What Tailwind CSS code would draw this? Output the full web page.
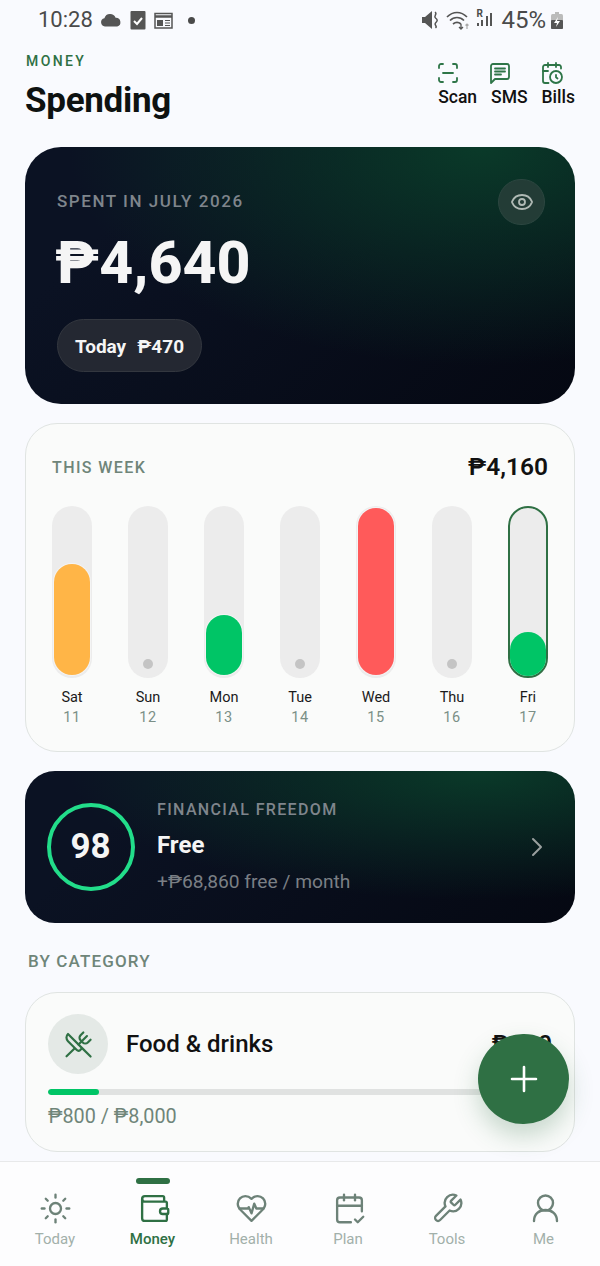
<!DOCTYPE html>
<html lang="en">
<head>
  <meta charset="UTF-8" />
  <meta name="viewport" content="width=device-width, initial-scale=1.0" />
  <title>Spending</title>
  <script src="https://cdn.jsdelivr.net/npm/@tailwindcss/browser@4"></script>
</head>
<body class="bg-[#f9fafe] font-['Roboto',sans-serif]">
<div class="relative w-[600px] h-[1266px] overflow-hidden">

  <!-- status bar -->
  <div class="h-[40px] flex items-center pl-[38px] pr-[37px] text-[#4a4a4a]">
    <span class="text-[22px] leading-none">10:28</span>
    <svg class="ml-[7px]" width="22" height="14" viewBox="0 0 22 14" fill="#555"><path d="M5 13.5a4.2 4.2 0 0 1-.6-8.3A6 6 0 0 1 15.6 4.7a4.5 4.5 0 0 1 1.6 8.8z"/></svg>
    <svg class="ml-[8px]" width="16" height="19" viewBox="0 0 16 19"><rect x="0.5" width="15" height="18.5" rx="1" fill="#555"/><path d="M4 10l3 3 5-6" stroke="#fff" stroke-width="2" fill="none"/></svg>
    <svg class="ml-[8px]" width="19" height="17" viewBox="0 0 19 17" fill="none" stroke="#555"><rect x="1" y="1.5" width="17" height="14.5" stroke-width="1.5"/><path d="M1 4.5h17" stroke-width="2.5"/><rect x="3" y="8" width="6" height="6" fill="#555" stroke="none"/><path d="M11 8.5h5M11 11h5M11 13.5h5" stroke-width="1"/></svg>
    <span class="ml-[15px] w-[7px] h-[7px] rounded-full bg-[#4a4a4a]"></span>
    <div class="ml-auto flex items-center">
      <svg width="17" height="20" viewBox="0 0 17 20" fill="#555"><path d="M0 7h3l7-6v18l-7-6H0z"/><path d="M13 2c3 2-2 4 .5 6s2 3 0 5 2.500 3 0 5" stroke="#555" stroke-width="1.5" fill="none"/></svg>
      <svg class="ml-[7px]" width="24" height="20" viewBox="0 0 24 20" fill="none" stroke="#555" stroke-width="1.7"><path d="M1 7c6-6 14-6 20 0M4 10.500c4-4 10-4 14 0M7 14c2.500-2 5.500-2 8 0"/><path d="M15 14v5M13 17l2 2 2-2" stroke-width="1.3"/><path d="M21 19v-5M19.500 15.500l1.500-1.500 1.500 1.500" stroke="#aaa" stroke-width="1.2"/></svg>
      <div class="relative ml-[6px] w-[17px] h-[22px]">
        <span class="absolute left-0 top-0 text-[10px] font-bold leading-none">R</span>
        <span class="absolute left-[1px] bottom-[5px] w-[2px] h-[3px] bg-[#555]"></span>
        <span class="absolute left-[5px] bottom-[5px] w-[2px] h-[6px] bg-[#555]"></span>
        <span class="absolute left-[10px] bottom-[5px] w-[2px] h-[10px] bg-[#555]"></span>
        <span class="absolute left-[14px] bottom-[5px] w-[2px] h-[13px] bg-[#555]"></span>
      </div>
      <span class="ml-[8px] text-[24px] leading-none">45%</span>
      <svg class="ml-[5px]" width="12" height="17" viewBox="0 0 12 17"><rect x="4" width="4" height="2" fill="#bbb"/><rect y="2" width="12" height="15" rx="1.5" fill="#bbb"/><rect y="8" width="12" height="9" rx="1" fill="#555"/><path d="M7 5L3 11h3l-1 4 4-6H6z" fill="#fff"/></svg>
    </div>
  </div>

  <!-- header -->
  <div class="flex justify-between pl-[25px] pr-[25px] h-[107px]">
    <div>
      <div class="mt-[13px] ml-[1px] text-[14px] leading-[16px] font-medium tracking-[2.4px] text-[#2f7044]">MONEY</div>
      <div class="mt-[12px] text-[35px] leading-[40px] font-bold text-[#0e1211] tracking-[-0.3px]">Spending</div>
    </div>
    <div class="flex gap-[14px] mt-[21px] h-fit">
      <div class="flex flex-col items-start">
        <svg class="-ml-[2px]" width="24" height="24" viewBox="0 0 24 24" fill="none" stroke="#2e7548" stroke-width="1.8" stroke-linecap="round" stroke-linejoin="round"><path d="M3 7V5a2 2 0 0 1 2-2h2"/><path d="M17 3h2a2 2 0 0 1 2 2v2"/><path d="M21 17v2a2 2 0 0 1-2 2h-2"/><path d="M7 21H5a2 2 0 0 1-2-2v-2"/><path d="M7 12h10"/></svg>
        <span class="mt-[2px] text-[17.5px] leading-[20px] font-medium text-[#111]">Scan</span>
      </div>
      <div class="flex flex-col items-start">
        <svg class="-ml-[3px]" width="24" height="24" viewBox="0 0 24 24" fill="none" stroke="#2e7548" stroke-width="1.8" stroke-linecap="round" stroke-linejoin="round"><path d="M21 16a2 2 0 0 1-2 2H7l-4 4V5a2 2 0 0 1 2-2h14a2 2 0 0 1 2 2z"/><path d="M7 7.500h10"/><path d="M7 10.500h10"/><path d="M7 13.500h6"/></svg>
        <span class="mt-[2px] text-[17.5px] leading-[20px] font-medium text-[#111]">SMS</span>
      </div>
      <div class="flex flex-col items-start">
        <svg class="-ml-[2px]" width="24" height="24" viewBox="0 0 24 24" fill="none" stroke="#2e7548" stroke-width="1.8" stroke-linecap="round" stroke-linejoin="round"><path d="M21 7.500V6a2 2 0 0 0-2-2H5a2 2 0 0 0-2 2v14a2 2 0 0 0 2 2h3.500"/><path d="M16 2v4"/><path d="M8 2v4"/><path d="M3 10h5"/><path d="M17.500 17.500 16 16.300V14"/><circle cx="16" cy="16" r="6"/></svg>
        <span class="mt-[2px] text-[17.5px] leading-[20px] font-medium text-[#111]">Bills</span>
      </div>
    </div>
  </div>

  <div class="px-[25px]">
    <!-- hero card -->
    <div class="relative h-[257px] rounded-[36px] bg-[radial-gradient(ellipse_75%_85%_at_83%_0%,#0a3a29_0%,transparent_100%),linear-gradient(135deg,#0b1223_20%,#050812_100%)] pt-[45px] pl-[32px]">
      <div class="text-[17px] leading-[19px] font-medium tracking-[1.55px] text-[#7f858c]">SPENT IN JULY 2026</div>
      <div class="mt-[18px] -ml-[2px] text-[59px] leading-[68px] font-extrabold text-[#f5f5f5]">₱4,640</div>
      <div class="mt-[22px] w-fit h-[53px] pl-[17px] pr-[17px] pt-[3px] flex items-center gap-[11px] rounded-full bg-[#242832] border border-[#33373f] text-[19px] font-bold text-[#f5f5f5]">
        <span>Today</span><span>₱470</span>
      </div>
      <div class="absolute top-[32px] right-[30px] w-[47px] h-[46px] rounded-full bg-[#233c36] border border-[#2c4640] flex items-center justify-center">
        <svg width="24" height="24" viewBox="0 0 24 24" fill="none" stroke="#b0bab5" stroke-width="1.8" stroke-linecap="round" stroke-linejoin="round"><path d="M2.062 12.348a1 1 0 0 1 0-.696 10.750 10.750 0 0 1 19.876 0 1 1 0 0 1 0 .696 10.750 10.750 0 0 1-19.876 0"/><circle cx="12" cy="12" r="3"/></svg>
      </div>
    </div>

    <!-- this week -->
    <div class="mt-[19px] h-[329px] rounded-[32px] bg-[#fafbfa] border-[1.5px] border-[#e0e4e2] px-[26px] pt-[30px]">
      <div class="flex items-center justify-between h-[27px]">
        <span class="text-[16px] font-medium tracking-[1.4px] text-[#6f8579]">THIS WEEK</span>
        <span class="text-[24.5px] font-semibold text-[#111]">₱4,160</span>
      </div>
      <div class="mt-[25px] flex justify-between">
        <!-- Sat -->
        <div class="w-[40px] flex flex-col items-center">
          <div class="relative w-[40px] h-[172px] rounded-full bg-[#ececec]">
            <div class="absolute left-[2px] right-[2px] bottom-[3px] h-[111px] rounded-[18px] bg-[#ffb547] shadow-[0_0_0_1px_#f4f4f4]"></div>
          </div>
          <div class="mt-[11px] text-[14.5px] leading-[18px] text-[#1a1a1a]">Sat</div>
          <div class="mt-[2px] text-[14.5px] leading-[18px] tracking-[0.5px] text-[#7a8f86]">11</div>
        </div>
        <!-- Sun -->
        <div class="w-[40px] flex flex-col items-center">
          <div class="relative w-[40px] h-[172px] rounded-full bg-[#ececec]">
            <div class="absolute left-[15px] bottom-[9px] w-[10px] h-[10px] rounded-full bg-[#c4c4c4]"></div>
          </div>
          <div class="mt-[11px] text-[14.5px] leading-[18px] text-[#1a1a1a]">Sun</div>
          <div class="mt-[2px] text-[14.5px] leading-[18px] tracking-[0.5px] text-[#7a8f86]">12</div>
        </div>
        <!-- Mon -->
        <div class="w-[40px] flex flex-col items-center">
          <div class="relative w-[40px] h-[172px] rounded-full bg-[#ececec]">
            <div class="absolute left-[2px] right-[2px] bottom-[3px] h-[60px] rounded-[18px] bg-[#00c566] shadow-[0_0_0_1px_#f4f4f4]"></div>
          </div>
          <div class="mt-[11px] text-[14.5px] leading-[18px] text-[#1a1a1a]">Mon</div>
          <div class="mt-[2px] text-[14.5px] leading-[18px] tracking-[0.5px] text-[#7a8f86]">13</div>
        </div>
        <!-- Tue -->
        <div class="w-[40px] flex flex-col items-center">
          <div class="relative w-[40px] h-[172px] rounded-full bg-[#ececec]">
            <div class="absolute left-[15px] bottom-[9px] w-[10px] h-[10px] rounded-full bg-[#c4c4c4]"></div>
          </div>
          <div class="mt-[11px] text-[14.5px] leading-[18px] text-[#1a1a1a]">Tue</div>
          <div class="mt-[2px] text-[14.5px] leading-[18px] tracking-[0.5px] text-[#7a8f86]">14</div>
        </div>
        <!-- Wed -->
        <div class="w-[40px] flex flex-col items-center">
          <div class="relative w-[40px] h-[172px] rounded-full bg-[#ececec]">
            <div class="absolute left-[2px] right-[2px] bottom-[3px] h-[167px] rounded-[18px] bg-[#ff5a5a] shadow-[0_0_0_1px_#f4f4f4]"></div>
          </div>
          <div class="mt-[11px] text-[14.5px] leading-[18px] text-[#1a1a1a]">Wed</div>
          <div class="mt-[2px] text-[14.5px] leading-[18px] tracking-[0.5px] text-[#7a8f86]">15</div>
        </div>
        <!-- Thu -->
        <div class="w-[40px] flex flex-col items-center">
          <div class="relative w-[40px] h-[172px] rounded-full bg-[#ececec]">
            <div class="absolute left-[15px] bottom-[9px] w-[10px] h-[10px] rounded-full bg-[#c4c4c4]"></div>
          </div>
          <div class="mt-[11px] text-[14.5px] leading-[18px] text-[#1a1a1a]">Thu</div>
          <div class="mt-[2px] text-[14.5px] leading-[18px] tracking-[0.5px] text-[#7a8f86]">16</div>
        </div>
        <!-- Fri -->
        <div class="w-[40px] flex flex-col items-center">
          <div class="relative w-[40px] h-[172px] rounded-full bg-[#ececec] border-2 border-[#2f7044]">
            <div class="absolute left-0 right-0 bottom-0 h-[44px] rounded-[18px] bg-[#00c566]"></div>
          </div>
          <div class="mt-[11px] text-[14.5px] leading-[18px] text-[#1a1a1a]">Fri</div>
          <div class="mt-[2px] text-[14.5px] leading-[18px] tracking-[0.5px] text-[#7a8f86]">17</div>
        </div>
      </div>
    </div>

    <!-- financial freedom -->
    <div class="mt-[19px] h-[152px] rounded-[30px] bg-[radial-gradient(ellipse_75%_85%_at_83%_0%,#0a3a29_0%,transparent_100%),linear-gradient(135deg,#0b1223_20%,#050812_100%)] flex items-center pl-[22px] pr-[31px]">
      <div class="w-[88px] h-[88px] pr-[1px] pt-[1px] rounded-full border-[4.5px] border-[#22dd8a] flex items-center justify-center text-[35px] font-bold text-[#f5f5f5]">98</div>
      <div class="ml-[22px]">
        <div class="-mt-[1px] text-[16px] leading-[19px] font-medium tracking-[1.35px] text-[#7f858c]">FINANCIAL FREEDOM</div>
        <div class="mt-[12px] text-[24px] leading-[28px] font-bold text-[#f5f5f5]">Free</div>
        <div class="mt-[12px] text-[19.2px] leading-[22px] text-[#7a7f85]">+₱68,860 free / month</div>
      </div>
      <svg class="ml-auto" width="14" height="22" viewBox="0 0 14 22" fill="none" stroke="#9aa09f" stroke-width="2" stroke-linecap="round" stroke-linejoin="round"><path d="M3 3l8 8-8 8"/></svg>
    </div>

    <!-- by category -->
    <div class="mt-[28px] ml-[3px] text-[17px] leading-[20px] font-medium tracking-[1.15px] text-[#6f8579]">BY CATEGORY</div>
    <div class="mt-[21px] h-[160px] rounded-[32px] bg-[#fafbfa] border-[1.5px] border-[#e0e4e2] px-[22px] pt-[21px]">
      <div class="flex items-center justify-between">
        <div class="flex items-center">
          <div class="w-[60px] h-[60px] rounded-full bg-[#e4e9e6] flex items-center justify-center">
            <svg width="29" height="29" viewBox="0 0 24 24" fill="none" stroke="#2f7044" stroke-width="1.8" stroke-linecap="round" stroke-linejoin="round"><path d="m16 2-2.3 2.3a3 3 0 0 0 0 4.2l1.8 1.8a3 3 0 0 0 4.2 0L22 8"/><path d="M15 15 3.3 3.3a4.2 4.2 0 0 0 0 6l7.3 7.3c.7.7 2 .7 2.8 0L15 15Zm0 0 7 7"/><path d="m2.1 21.8 6.4-6.3"/><path d="m19 5-7 7"/></svg>
          </div>
          <span class="ml-[18px] text-[24px] font-medium text-[#111]">Food &amp; drinks</span>
        </div>
        <span class="text-[24.5px] font-semibold text-[#111]">₱800</span>
      </div>
      <div class="mt-[15px] h-[6px] rounded-full bg-[#e0e2e1] overflow-hidden">
        <div class="h-full w-[51px] rounded-full bg-[#00c566]"></div>
      </div>
      <div class="mt-[10px] text-[19.8px] leading-[24px] text-[#6f8579]">₱800 / ₱8,000</div>
    </div>
  </div>

  <!-- fab -->
  <div class="absolute left-[478px] top-[1034px] w-[91px] h-[90px] rounded-full bg-[#2f7044] shadow-[0_12px_24px_rgba(47,112,68,0.25)] flex items-center justify-center">
    <svg width="28" height="28" viewBox="0 0 28 28" stroke="#fff" stroke-width="2.6" stroke-linecap="round"><path d="M14 2v24M2 14h24"/></svg>
  </div>

  <!-- bottom nav -->
  <div class="absolute left-0 right-0 bottom-0 h-[105px] bg-[#fdfdfe] border-t border-[#e8e9ea] flex">
    <div class="w-[110px] pt-[30px] flex flex-col items-center">
      <svg width="33" height="33" viewBox="0 0 24 24" fill="none" stroke="#6d8278" stroke-width="1.7" stroke-linecap="round" stroke-linejoin="round"><circle cx="12" cy="12" r="4"/><path d="M12 2v2"/><path d="M12 20v2"/><path d="m4.930 4.930 1.410 1.410"/><path d="m17.660 17.660 1.410 1.410"/><path d="M2 12h2"/><path d="M20 12h2"/><path d="m6.340 17.660-1.410 1.410"/><path d="m19.070 4.930-1.410 1.410"/></svg>
      <span class="mt-[5px] text-[15px] leading-[18px] text-[#a2b0aa]">Today</span>
    </div>
    <div class="relative w-[88px] pt-[30px] flex flex-col items-center">
      <span class="absolute top-[16px] left-[26px] w-[34px] h-[6px] rounded-full bg-[#2f7044]"></span>
      <svg width="33" height="33" viewBox="0 0 24 24" fill="none" stroke="#2f7044" stroke-width="1.7" stroke-linecap="round" stroke-linejoin="round"><path d="M19 7V4a1 1 0 0 0-1-1H5a2 2 0 0 0 0 4h15a1 1 0 0 1 1 1v4h-3a2 2 0 0 0 0 4h3a1 1 0 0 0 1-1v-2a1 1 0 0 0-1-1"/><path d="M3 5v14a2 2 0 0 0 2 2h15a1 1 0 0 0 1-1v-4"/></svg>
      <span class="mt-[5px] -ml-[3px] text-[15px] leading-[18px] font-medium text-[#2f7044]">Money</span>
    </div>
    <div class="w-[106px] pt-[30px] flex flex-col items-center">
      <svg width="33" height="33" viewBox="0 0 24 24" fill="none" stroke="#6d8278" stroke-width="1.7" stroke-linecap="round" stroke-linejoin="round"><path d="M19 14c1.490-1.460 3-3.210 3-5.500A5.500 5.500 0 0 0 16.500 3c-1.760 0-3 .5-4.500 2-1.500-1.500-2.740-2-4.500-2A5.500 5.500 0 0 0 2 8.500c0 2.300 1.500 4.050 3 5.500l7 7Z"/><path d="M3.220 12H9.500l.5-1 2 4.500 2-7 1.500 3.500h5.270"/></svg>
      <span class="mt-[5px] text-[15px] leading-[18px] text-[#a2b0aa]">Health</span>
    </div>
    <div class="w-[90px] pt-[30px] flex flex-col items-center">
      <svg width="33" height="33" viewBox="0 0 24 24" fill="none" stroke="#6d8278" stroke-width="1.7" stroke-linecap="round" stroke-linejoin="round"><path d="M8 2v4"/><path d="M16 2v4"/><path d="M21 14V6a2 2 0 0 0-2-2H5a2 2 0 0 0-2 2v14a2 2 0 0 0 2 2h8"/><path d="M3 10h18"/><path d="m16 20 2 2 4-4"/></svg>
      <span class="mt-[5px] -ml-[2px] text-[15px] leading-[18px] text-[#a2b0aa]">Plan</span>
    </div>
    <div class="w-[106px] pt-[30px] flex flex-col items-center">
      <svg width="33" height="33" viewBox="0 0 24 24" fill="none" stroke="#6d8278" stroke-width="1.7" stroke-linecap="round" stroke-linejoin="round"><path d="M14.700 6.300a1 1 0 0 0 0 1.400l1.600 1.600a1 1 0 0 0 1.400 0l3.770-3.770a6 6 0 0 1-7.940 7.940l-6.910 6.910a2.120 2.120 0 0 1-3-3l6.910-6.910a6 6 0 0 1 7.940-7.940l-3.760 3.760z"/></svg>
      <span class="mt-[5px] text-[15px] leading-[18px] text-[#a2b0aa]">Tools</span>
    </div>
    <div class="w-[90px] pt-[30px] flex flex-col items-center">
      <svg width="33" height="33" viewBox="0 0 33 33" fill="none" stroke="#6d8278" stroke-width="2.4" stroke-linecap="round"><circle cx="16.500" cy="11" r="7.500"/><path d="M5 29c0-7 5-11 11.500-11S28 22 28 29"/></svg>
      <span class="mt-[5px] -ml-[3px] text-[15px] leading-[18px] text-[#a2b0aa]">Me</span>
    </div>
  </div>
</div>
</body>
</html>
